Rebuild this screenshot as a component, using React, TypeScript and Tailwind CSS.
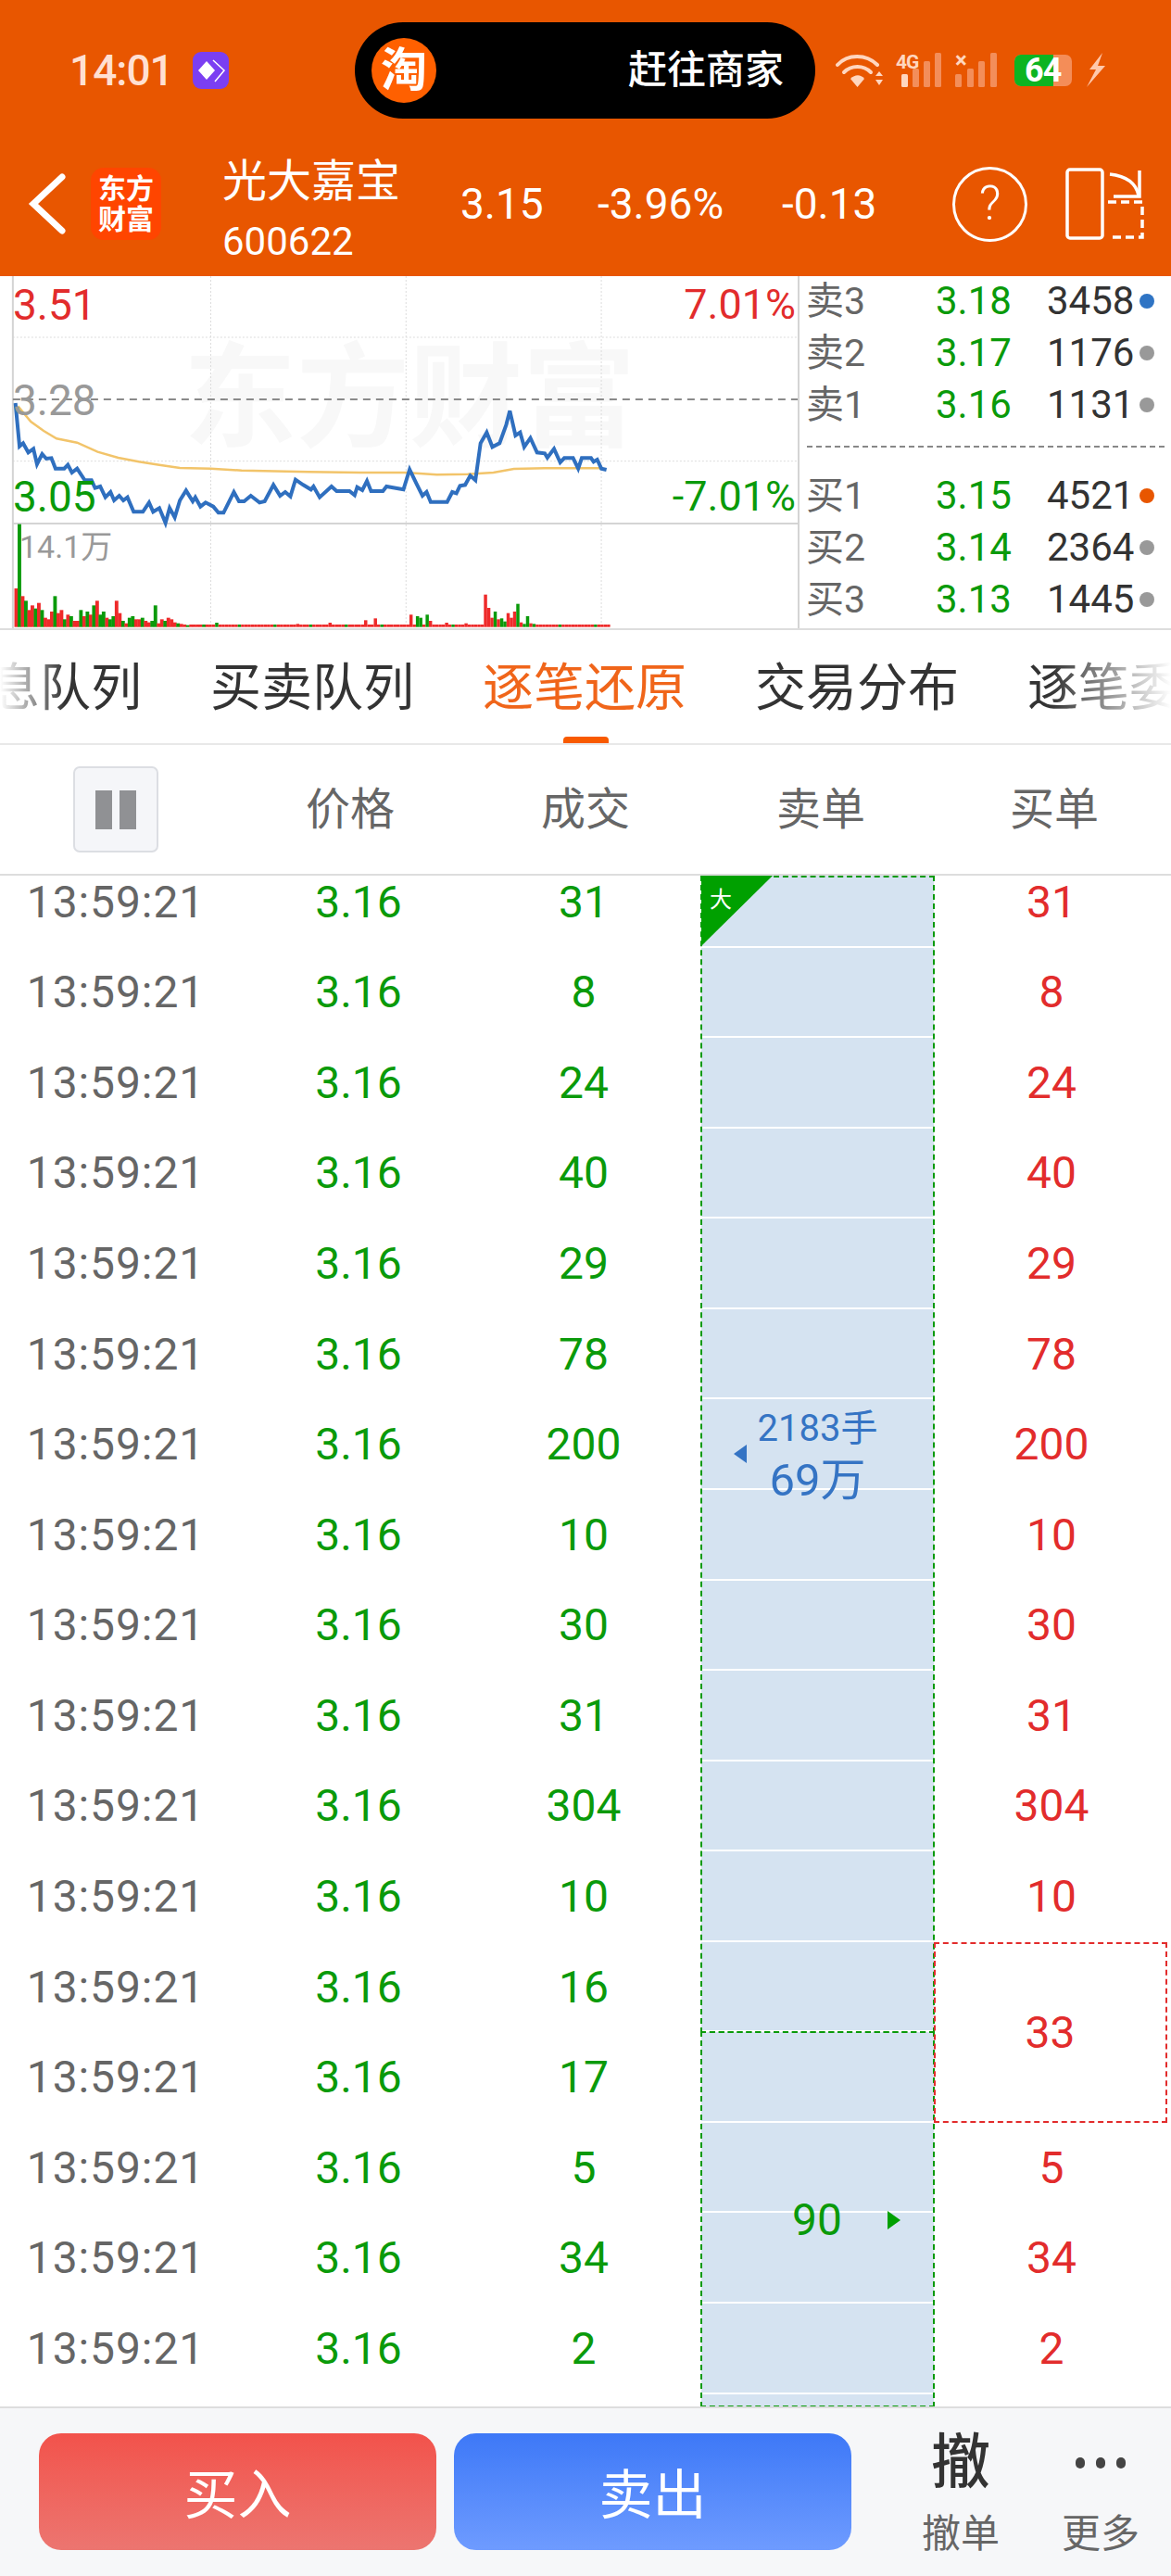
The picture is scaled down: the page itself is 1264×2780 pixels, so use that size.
import React from "react";

const blue: [number, number][] = [[30,420],[38,560],[45,550],[55,580],[65,568],[72,618],[82,585],[90,600],[100,598],[108,632],[125,632],[132,620],[140,645],[150,632],[165,670],[178,670],[185,695],[195,690],[205,725],[215,708],[222,735],[232,720],[240,735],[248,725],[260,772],[278,772],[290,742],[298,772],[310,760],[322,808],[330,760],[340,790],[350,735],[362,703],[375,738],[380,725],[390,755],[400,742],[415,755],[425,775],[435,775],[455,708],[465,738],[475,738],[488,720],[505,742],[515,738],[532,685],[545,720],[555,708],[565,722],[575,668],[590,685],[605,700],[610,690],[622,725],[645,690],[655,705],[680,705],[690,718],[695,692],[705,702],[714,672],[722,705],[745,705],[752,690],[785,700],[797,635],[810,680],[822,720],[830,708],[838,740],[870,740],[880,708],[888,712],[895,688],[905,685],[915,655],[925,670],[935,550],[947,515],[958,562],[972,550],[985,490],[992,445],[1003,525],[1012,515],[1020,562],[1032,533],[1045,580],[1060,583],[1065,597],[1078,568],[1090,612],[1098,598],[1115,598],[1125,632],[1132,598],[1150,598],[1155,610],[1162,603],[1170,632],[1180,636]];
const avg: [number, number][] = [[35,430],[60,480],[85,510],[110,535],[150,548],[190,578],[230,597],[270,610],[310,620],[350,630],[410,632],[470,638],[600,643],[700,645],[790,645],[850,652],[910,650],[960,645],[1000,633],[1060,631],[1170,631]];
const pts = (a: [number, number][]) => a.map((p) => p.join(",")).join(" ");

const head = [125,-333,100,-85,55,70,-60,78,-55,30,25,50,-100,45,55,-25,40,-35,20,20,-55,35,-50,40,-70,85,-40,-50,30,-25,-35,85,45,-20,12,-30,-35,25,25,-30,20,15,-20,-70,12,25,-20,30,25,15,-12,10,8,-6,8,8];
const later: Record<number, number> = { 62: -14, 87: 10, 97: 14, 108: 22, 111: 28, 122: 40, 124: -35, 125: -30, 127: -40, 128: 20, 133: 14, 139: 12, 144: 8, 145: 105, 146: 62, 147: 30, 148: -50, 149: 25, 150: -28, 151: -18, 152: 45, 153: 30, 154: 50, 155: -75, 156: 15, 157: -10, 158: -35, 159: 12, 160: -10 };
const vols: number[] = Array.from({ length: 184 }, (_, i) => {
  if (i < head.length) return head[i];
  if (later[i] !== undefined) return later[i];
  return i % 11 === 3 ? -8 : 8;
});

const rows = ["31","8","24","40","29","78","200","10","30","31","304","10","16","17","5","34","2","8"];

function Chart() {
  return (
    <div className="relative w-[861px] h-full bg-white overflow-hidden">
      <div className="absolute left-[198px] top-[72px] text-[122px] leading-[122px] font-bold text-[#f8f8f8] whitespace-nowrap">东方财富</div>
      <svg className="absolute inset-0 w-full h-full" viewBox="0 9 1552 1140" preserveAspectRatio="none">
        {[410, 790, 1170].map((x) => (
          <line key={x} x1={x} x2={x} y1={9} y2={1149} stroke="#dcdcdc" strokeWidth={1} strokeDasharray="2 2" vectorEffect="non-scaling-stroke" />
        ))}
        {[207, 608].map((y) => (
          <line key={y} x1={25} x2={1552} y1={y} y2={y} stroke="#dcdcdc" strokeWidth={1} strokeDasharray="2 2" vectorEffect="non-scaling-stroke" />
        ))}
        <line x1={25} x2={25} y1={9} y2={1149} stroke="#d4d4d4" strokeWidth={2} vectorEffect="non-scaling-stroke" />
        <line x1={25} x2={1552} y1={810} y2={810} stroke="#d4d4d4" strokeWidth={2} vectorEffect="non-scaling-stroke" />
        <line x1={25} x2={1552} y1={408} y2={408} stroke="#8a8a8a" strokeWidth={2} strokeDasharray="8 6" vectorEffect="non-scaling-stroke" />
        <polyline points={pts(avg)} fill="none" stroke="#F2C46A" strokeWidth={2.5} vectorEffect="non-scaling-stroke" />
        <polyline points={pts(blue)} fill="none" stroke="#2F6FBF" strokeWidth={4} strokeLinejoin="miter" vectorEffect="non-scaling-stroke" />
        {vols.map((v, i) => {
          const h = Math.abs(v);
          return <rect key={i} x={28 + i * 6.3} y={1145 - h} width={i < 60 ? 7 : 6.3} height={h} fill={v > 0 ? "#EE2A2A" : "#0A9A0A"} />;
        })}
      </svg>
      <div className="absolute left-[14px] top-[7px] text-[46px] leading-[48px] text-[#E22C2C]">3.51</div>
      <div className="absolute right-[2px] top-[7px] text-[45px] leading-[48px] text-[#E22C2C]">7.01%</div>
      <div className="absolute left-[14px] top-[110px] text-[46px] leading-[48px] text-[#999]">3.28</div>
      <div className="absolute left-[14px] top-[214px] text-[46px] leading-[48px] text-[#0A9A0A]">3.05</div>
      <div className="absolute right-[2px] top-[214px] text-[45px] leading-[48px] text-[#0A9A0A]">-7.01%</div>
      <div className="absolute left-[21px] top-[272px] text-[34px] leading-[40px] text-[#999]">14.1万</div>
    </div>
  );
}

function Quote({ label, price, qty, dot }: { label: string; price: string; qty: string; dot: string }) {
  return (
    <div className="flex items-center h-[56px]">
      <span className="w-[147px] pl-[7px] text-[41px] leading-none text-[#666]">{label}</span>
      <span className="w-[120px] text-[42px] leading-none text-[#0A9A0A]">{price}</span>
      <span className="w-[100px] text-[42px] leading-none text-[#333]">{qty}</span>
      <span className="w-[16px] h-[16px] rounded-full" style={{ background: dot }} />
    </div>
  );
}

function Tabs() {
  const tabs = ["消息队列", "买卖队列", "逐笔还原", "交易分布", "逐笔委托"];
  return (
    <div className="relative h-[124px] shrink-0 flex items-center overflow-hidden border-b-2 border-[#E8E8E8] pt-[3px]">
      <div className="flex shrink-0 -ml-[67px] gap-[71px] text-[55px] leading-none text-[#333] whitespace-nowrap">
        {tabs.map((t) => (
          <span key={t} className={t === "逐笔还原" ? "text-[#F0651A] w-[223px]" : "w-[223px]"}>{t}</span>
        ))}
      </div>
      <div className="absolute left-0 top-0 bottom-0 w-[70px] bg-linear-to-r from-white to-transparent" />
      <div className="absolute right-0 top-0 bottom-0 w-[130px] bg-linear-to-l from-white to-transparent" />
      <div className="absolute left-[608px] bottom-0 w-[49px] h-[7px] rounded-t-[4px] bg-[#F85A00]" />
    </div>
  );
}

function Row({ q, i }: { q: string; i: number }) {
  const merged = i === 12 || i === 13;
  return (
    <div className="flex h-[97.5625px] items-center text-[48px] leading-none">
      <div className="w-[250px] text-center text-[#666] tracking-[0.9px]">13:59:21</div>
      <div className="w-[274px] text-center text-[#0A9A0A]">3.16</div>
      <div className="w-[212px] text-center text-[#0A9A0A]">{q}</div>
      <div className="ml-[21px] w-[251px] h-full bg-[#D5E3F1] border-b-2 border-white" />
      <div className="w-[254px] text-center text-[#E22C2C]">{merged ? "" : q}</div>
    </div>
  );
}

export default function App() {
  return (
    <div className="w-[1264px] h-[2780px] flex flex-col bg-white overflow-hidden [font-family:Roboto,'Noto_Sans_CJK_SC',sans-serif]">
      <header className="h-[298px] shrink-0 bg-[#E85600] text-white">
        <div className="h-[152px] flex items-center pl-[75px]">
          <span className="w-[107px] text-[46px] leading-none font-medium text-[#FFE0D2] tracking-[-1px]">14:01</span>
          <div className="ml-[26px] w-[39px] h-[40px] rounded-[9px] bg-[#7B3FF2] flex items-center justify-center">
            <svg width="32" height="30" viewBox="0 0 32 30">
              <path d="M11 5 L20 15 L11 25 L2 15 Z" fill="#fff" />
              <path d="M18 4 L30 15 L20 27" fill="none" stroke="#fff" strokeWidth="1.5" />
            </svg>
          </div>
          <div className="ml-[136px] w-[497px] h-[104px] rounded-full bg-black flex items-center pl-[18px]">
            <div className="w-[70px] h-[70px] rounded-full bg-[#FF6000] flex items-center justify-center text-[50px] leading-none font-bold">淘</div>
            <span className="ml-[207px] text-[42px] leading-none whitespace-nowrap font-medium">赶往商家</span>
          </div>
          <svg className="ml-[22px]" width="52" height="38" viewBox="0 0 52 38">
            <g fill="none" stroke="#FFD6BF" strokeWidth="4" strokeLinecap="round">
              <path d="M2 13 C13 1 33 1 45 13" />
              <path d="M9 21 C17 13 30 13 38 21" />
            </g>
            <path d="M16 28 C21 23 27 23 31 28 L23.5 37 Z" fill="#FFD6BF" />
            <path d="M43 25 L47 20 L51 25 Z M43 29 L51 29 L47 35 Z" fill="#FFD6BF" />
          </svg>
          <div className="ml-[13px] w-[50px] h-[38px] relative">
            <span className="absolute left-0 top-0 text-[21px] leading-none font-bold text-[#FFD6BF] tracking-[-1px]">4G</span>
            <svg className="absolute inset-0" width="50" height="38" viewBox="0 0 50 38">
              <rect x="6" y="23" width="7" height="14" rx="1.5" fill="#FFD6BF" />
              <rect x="18" y="17" width="7" height="20" rx="1.5" fill="#F38E5A" />
              <rect x="30" y="9" width="7" height="28" rx="1.5" fill="#F38E5A" />
              <rect x="42" y="0" width="7" height="37" rx="1.5" fill="#F38E5A" />
            </svg>
          </div>
          <div className="ml-[14px] relative w-[48px] h-[38px]">
            <span className="absolute left-0 -top-[4px] text-[24px] leading-none font-bold text-[#FFD6BF]">×</span>
            <svg className="absolute inset-0" width="48" height="38" viewBox="0 0 48 38">
              <rect x="0" y="23" width="7" height="14" rx="1.5" fill="#F38E5A" />
              <rect x="13" y="17" width="7" height="20" rx="1.5" fill="#F38E5A" />
              <rect x="25" y="9" width="7" height="28" rx="1.5" fill="#F38E5A" />
              <rect x="38" y="0" width="7" height="37" rx="1.5" fill="#F38E5A" />
            </svg>
          </div>
          <div className="ml-[16px] relative w-[62px] h-[34px] rounded-[7px] bg-[#F48D58] overflow-hidden">
            <div className="w-[42px] h-full bg-[#0CB421]" />
            <span className="absolute left-[11px] top-0 h-full flex items-center text-[36px] leading-none font-bold text-white tracking-[-1px]">64</span>
          </div>
          <svg className="ml-[15px]" width="22" height="38" viewBox="0 0 22 38">
            <path d="M18 0 L4 18 L11 18 L1 37 L21 14 L13 14 L18 0 Z" fill="#FFC9AC" />
          </svg>
        </div>
        <div className="h-[136px] flex items-center">
          <svg className="ml-[30px]" width="42" height="66" viewBox="0 0 42 66">
            <path d="M37 4 L6 33 L37 62" fill="none" stroke="#fff" strokeWidth="7" strokeLinecap="round" strokeLinejoin="miter" />
          </svg>
          <div className="ml-[26px] w-[76px] h-[78px] rounded-[14px] bg-[#FF4500] flex flex-col items-center justify-center text-[30px] leading-[33px] font-bold">
            <span>东方</span>
            <span>财富</span>
          </div>
          <div className="ml-[66px] w-[257px] flex flex-col self-start">
            <span className="text-[48px] leading-[56px] mt-[16px]">光大嘉宝</span>
            <span className="text-[42px] leading-[48px] mt-[13px]">600622</span>
          </div>
          <span className="w-[148px] text-[46px] leading-none">3.15</span>
          <span className="w-[199px] text-[46px] leading-none">-3.96%</span>
          <span className="w-[184px] text-[46px] leading-none">-0.13</span>
          <div className="w-[81px] h-[81px] rounded-full border-[3px] border-white flex items-center justify-center text-[52px] leading-none font-light">?</div>
          <svg className="ml-[41px]" width="86" height="78" viewBox="0 0 86 78">
            <rect x="2" y="2" width="38" height="74" rx="3" fill="none" stroke="#fff" strokeWidth="3.5" />
            <g fill="none" stroke="#fff" strokeWidth="3.5">
              <path d="M48 7 Q75 10 79 30" />
              <path d="M80 3 V31 H52" />
              <path d="M46 37 H83 V75 H46" strokeDasharray="9 5" />
            </g>
          </svg>
        </div>
      </header>

      <section className="h-[382px] shrink-0 flex border-b-2 border-[#DDD]">
        <Chart />
        <div className="flex-1 border-l-2 border-[#D4D4D4] flex flex-col">
          <div className="flex flex-col -translate-y-[1px]">
            <Quote label="卖3" price="3.18" qty="3458" dot="#2F74C4" />
            <Quote label="卖2" price="3.17" qty="1176" dot="#999" />
            <Quote label="卖1" price="3.16" qty="1131" dot="#999" />
            <div className="h-[42px] flex items-center pl-[8px]">
              <div className="w-[386px] border-t-2 border-dashed border-[#888] -translate-y-[4px]" />
            </div>
            <Quote label="买1" price="3.15" qty="4521" dot="#E85600" />
            <Quote label="买2" price="3.14" qty="2364" dot="#999" />
            <Quote label="买3" price="3.13" qty="1445" dot="#999" />
          </div>
        </div>
      </section>

      <Tabs />

      <div className="h-[141px] shrink-0 flex items-center text-[48px] leading-none text-[#666] border-b-2 border-[#DDD]">
        <div className="ml-[79px] w-[92px] h-[93px] rounded-[7px] bg-[#F5F6F9] border-2 border-[#DCDEE3] flex items-center justify-center gap-[8px]">
          <span className="w-[18px] h-[42px] bg-[#909194]" />
          <span className="w-[18px] h-[42px] bg-[#909194]" />
        </div>
        <span className="ml-[159px] w-[254px]">价格</span>
        <span className="w-[254px]">成交</span>
        <span className="w-[252px]">卖单</span>
        <span>买单</span>
      </div>

      <div className="relative flex-1 min-h-0 overflow-hidden">
        <div className="-mt-[20px]">
          {rows.map((q, i) => (
            <Row key={i} q={q} i={i} />
          ))}
        </div>
        <div className="absolute left-[756px] top-0 w-[253px] h-[1249px] border-2 border-dashed border-[#0A9A0A]" />
        <div className="absolute left-[756px] top-[1247px] w-[253px] h-[406px] border-2 border-dashed border-[#0A9A0A]" />
        <div className="absolute left-[1008px] top-[1151px] w-[252px] h-[195px] border-2 border-dashed border-[#E22C2C] flex items-center justify-center text-[48px] leading-none text-[#E22C2C] pr-[1px]">33</div>
        <svg className="absolute left-[757px] top-0" width="77" height="76" viewBox="0 0 77 76">
          <path d="M0 0 H77 L0 76 Z" fill="#00A000" />
        </svg>
        <span className="absolute left-[766px] top-[12px] text-[24px] leading-[28px] text-white">大</span>
        <div className="absolute left-[757px] top-[568px] w-[251px] flex flex-col items-center text-[#3574C4] leading-none">
          <span className="text-[40px] leading-[58px]">2183手</span>
          <span className="text-[49px] leading-[54px]">69万</span>
        </div>
        <div className="absolute left-[792px] top-[614px] w-0 h-0 border-y-[10px] border-y-transparent border-r-[14px] border-r-[#3574C4]" />
        <span className="absolute left-[855px] top-[1426px] text-[48px] leading-[50px] text-[#0A9A0A]">90</span>
        <div className="absolute left-[958px] top-[1441px] w-0 h-0 border-y-[10px] border-y-transparent border-l-[14px] border-l-[#00A000]" />
      </div>

      <footer className="h-[183px] shrink-0 flex items-start pt-[27px] bg-[#F6F7F9] border-t-2 border-[#DDD]">
        <button className="ml-[42px] w-[429px] h-[126px] pt-[8px] rounded-[24px] bg-linear-to-b from-[#F2524B] to-[#EC7570] text-white text-[58px] leading-none">买入</button>
        <button className="ml-[19px] w-[429px] h-[126px] pt-[8px] rounded-[24px] bg-linear-to-b from-[#3D78F7] to-[#6E9BFF] text-white text-[58px] leading-none">卖出</button>
        <div className="ml-[58px] w-[120px] flex flex-col items-center">
          <span className="text-[64px] leading-[64px] font-medium text-[#333]">撤</span>
          <span className="mt-[21px] text-[42px] leading-[48px] text-[#666]">撤单</span>
        </div>
        <div className="ml-[31px] w-[120px] flex flex-col items-center">
          <div className="h-[64px] flex items-center gap-[12px]">
            <span className="w-[10px] h-[12px] rounded-full bg-[#444]" />
            <span className="w-[10px] h-[12px] rounded-full bg-[#444]" />
            <span className="w-[10px] h-[12px] rounded-full bg-[#444]" />
          </div>
          <span className="mt-[21px] text-[42px] leading-[48px] text-[#666]">更多</span>
        </div>
      </footer>
    </div>
  );
}
